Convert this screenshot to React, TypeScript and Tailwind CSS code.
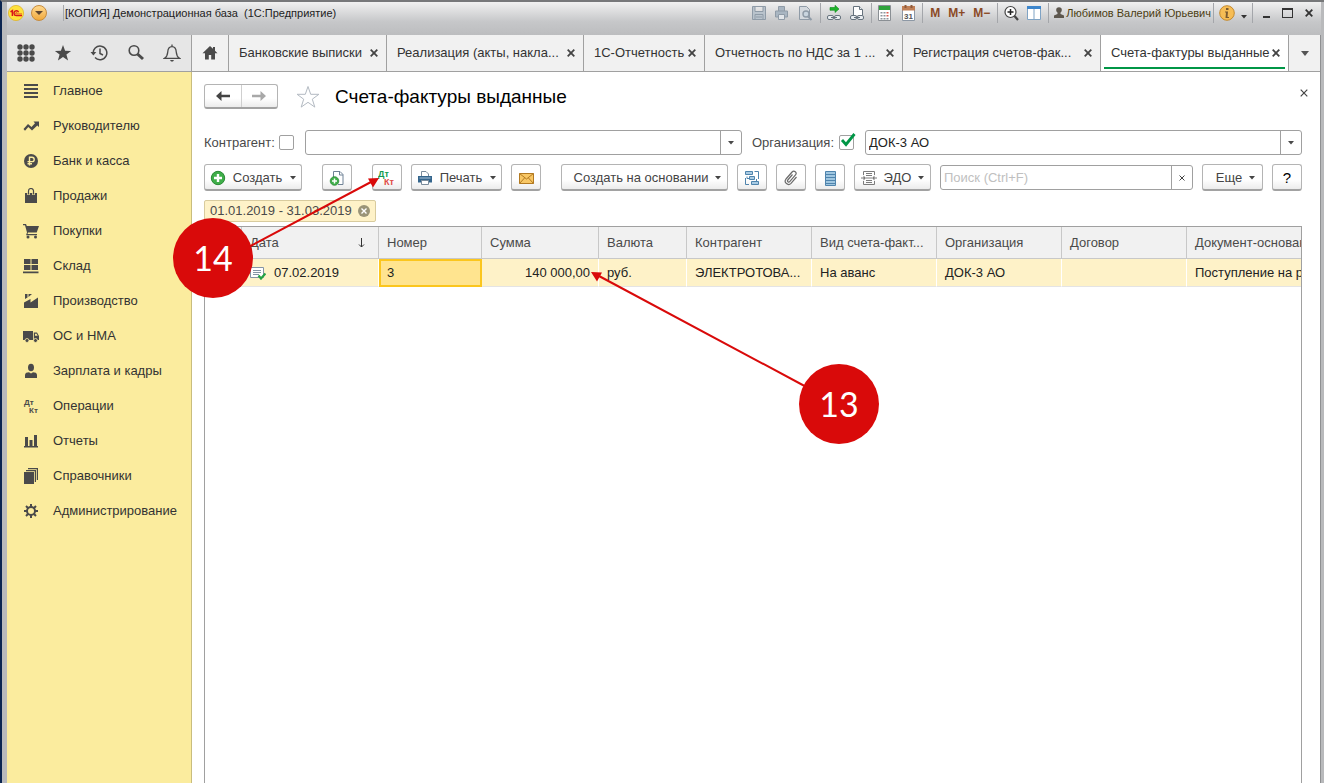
import type { ReactNode } from 'react'

// ─── Shared bits ───
const FONT = 'font-["Liberation_Sans",Arial,sans-serif]'

function Caret({ className = '' }: { className?: string }) {
  return (
    <svg viewBox="0 0 6 4" className={`h-1 w-1.5 shrink-0 ${className}`} fill="currentColor" aria-hidden="true">
      <path d="M0 0h6L3 3.5z" />
    </svg>
  )
}

function Cross({ bold = false }: { bold?: boolean }) {
  return (
    <svg viewBox="0 0 8 8" className="h-2 w-2 shrink-0" stroke="currentColor" strokeWidth={bold ? 1.8 : 1.2} aria-hidden="true">
      <path d="M.7.7l6.6 6.6M7.3.7L.7 7.3" />
    </svg>
  )
}

interface ToolButtonProps {
  children: ReactNode
  label?: string
  className?: string
}

function ToolButton({ children, label, className = '' }: ToolButtonProps) {
  return (
    <button
      type="button"
      aria-label={label}
      className={`flex h-[27px] shrink-0 items-center justify-center rounded-[3px] border border-b-2 border-[#b4b4b4] border-b-[#a2a2a2] bg-linear-to-b from-white from-60% to-[#ececec] pt-0.5 text-[#444] ${className}`}
    >
      {children}
    </button>
  )
}

// ─── Window title bar ───
function Separator() {
  return <span className="h-5 w-px bg-[#a4a6aa]" />
}

function TitleBar() {
  return (
    <header className="flex h-[33px] items-start bg-linear-to-b from-[#f1f1f1] via-[#c6c7c9] via-60% to-[#bcbdbf] pr-2">
      <div className="flex h-[21px] w-full items-center">
        <svg viewBox="0 0 16 16" className="ml-px h-4 w-4" aria-hidden="true">
          <circle cx="8" cy="8" r="7.6" fill="#ffe23b" stroke="#e0b52a" strokeWidth=".8" />
          <path d="M2.500 6.800L4.400 5.600V11" fill="none" stroke="#d8141b" strokeWidth="1.500" />
          <path d="M10.600 7.200A2.400 2.400 0 1 0 8.500 10.600H14" fill="none" stroke="#d8141b" strokeWidth="1.400" />
          <path d="M9.200 7.800a.8.8 0 1 0-.6 1.200H14" fill="none" stroke="#d8141b" strokeWidth=".8" />
        </svg>
        <button type="button" aria-label="Меню" className="ml-[7px] flex h-4 w-4 items-center justify-center rounded-full border border-[#c78b3c] bg-linear-to-b from-[#ffd98c] to-[#f0a93a] text-[#5e4630]">
          <svg viewBox="0 0 8 4" className="h-1 w-2" fill="currentColor" aria-hidden="true"><path d="M0 0h8L4 4z" /></svg>
        </button>
        <span className="ml-4 mr-px h-4 w-px bg-[#a7a9ac]" />
        <span className="flex-1 truncate whitespace-pre text-[11px] text-[#222]">[КОПИЯ] Демонстрационная база  (1С:Предприятие)</span>
        <SystemTools />
      </div>
    </header>
  )
}

function SystemTools() {
  return (
    <div className="flex items-center">
      <svg viewBox="0 0 62 16" className="mr-[7px] h-4 w-[62px]" fill="none" stroke="#8f9ba7" aria-hidden="true">
        <path d="M1.500 1.500h13v13h-13zM4 1.500v5h8v-5M4 14.500v-5h8v5M5 12h6" fill="#b9c3cc" />
        <path d="M27.500 6V1.500h6V6M24.500 6h12v6h-12z" fill="#a9b6c2" />
        <path d="M27.500 9.500h6v5h-6z" fill="#e2e6ea" />
        <path d="M48.500 1.500h7l3 3v10h-10z" fill="#d4d9de" />
        <circle cx="55" cy="9" r="3" fill="#c9d5df" strokeWidth="1.400" />
        <path d="M57 11.500l3.500 3.500" strokeWidth="2" />
      </svg>
      <Separator />
      <svg viewBox="0 0 40 16" className="mx-[5px] h-4 w-10" fill="none" aria-hidden="true">
        <path d="M4 2.500h5V.3L13 4 9 7.500V5.300H4z" fill="#1fb42b" stroke="#0d8a1c" strokeWidth=".6" />
        <g stroke="#66727d" fill="#e9edf0">
          <rect x="1.500" y="10.500" width="6" height="4" rx="1.500" />
          <rect x="8.500" y="10.500" width="6" height="4" rx="1.500" />
          <path d="M5 12.500h6" />
          <path d="M27.500 10V1.500h6l3 3V10" fill="#fff" />
          <path d="M33.500 1.500v3h3" />
          <rect x="24.500" y="10.500" width="6" height="4" rx="1.500" />
          <rect x="31.500" y="10.500" width="6" height="4" rx="1.500" />
          <path d="M28 12.500h6" />
        </g>
      </svg>
      <Separator />
      <svg viewBox="0 0 38 16" className="mx-[6px] h-4 w-[38px]" aria-hidden="true">
        <path d="M.5.500h12v15H.5z" fill="#fff" stroke="#8a8f94" />
        <path d="M1 1h11v4H1z" fill="#2fa33c" />
        <path d="M2.500 7h2v1.500h-2zM5.500 7h2v1.500h-2zM2.500 10h2v1.500h-2zM5.500 10h2v1.500h-2zM2.500 13h2v1.500h-2zM5.500 13h2v1.500h-2zM8.500 13h2v1.500h-2z" fill="#8d959c" />
        <path d="M8.500 7h2v1.500h-2zM8.500 10h2v1.500h-2z" fill="#d85a50" />
        <path d="M24.500 2.500h12v13h-12z" fill="#fff" stroke="#8d98a5" />
        <path d="M24 1h13v4.500H24z" fill="#c07f56" />
        <path d="M26.500 0h2v3h-2zM32.500 0h2v3h-2z" fill="#8e5a3a" />
        <text x="30.500" y="13.500" fontSize="8" fontWeight="bold" textAnchor="middle" fill="#555">31</text>
      </svg>
      <Separator />
      <div className="mx-[7px] flex gap-2 text-xs font-bold text-[#8b4a26]">
        <button type="button">M</button>
        <button type="button">M+</button>
        <button type="button">M−</button>
      </div>
      <Separator />
      <svg viewBox="0 0 40 16" className="mx-[5px] h-4 w-10" fill="none" aria-hidden="true">
        <circle cx="7.500" cy="7" r="5.500" fill="#fff" stroke="#444" strokeWidth="1.200" />
        <path d="M4.500 7h6M7.500 4v6" stroke="#222" strokeWidth="1.500" />
        <path d="M11.500 11l3.500 4" stroke="#444" strokeWidth="2.200" />
        <path d="M24.500 1.500h13v13h-13zM31 4v10" fill="#fff" stroke="#7fa3c4" />
        <path d="M24 1h14v3H24z" fill="#3d86cc" />
      </svg>
      <Separator />
      <svg viewBox="0 0 10 12" className="ml-[5px] h-3 w-[10px]" fill="#5d574e" aria-hidden="true">
        <circle cx="5" cy="3" r="2.800" />
        <path d="M3.500 5h3v2L10 8.500V11H0V8.500L3.500 7z" />
      </svg>
      <span className="mx-0.5 text-[11px] text-[#4b3d12]">Любимов Валерий Юрьевич</span>
      <Separator />
      <svg viewBox="0 0 16 16" className="ml-[5px] h-4 w-4" aria-hidden="true">
        <circle cx="8" cy="8" r="7.300" fill="#f6bd55" stroke="#c48a2e" />
        <path d="M7 3h2.500v2H7zM6 6.500h3L8.500 12H10v1H6.500L7 7.500H6z" fill="#7a5a30" />
      </svg>
      <Caret className="ml-[6px] mr-[5px] mt-2 text-[#333]" />
      <Separator />
      <div className="ml-[10px] flex items-center gap-3 text-[#333]">
        <button type="button" aria-label="Свернуть" className="mt-2 h-0.5 w-[7px] bg-current" />
        <button type="button" aria-label="Развернуть" className="h-[10px] w-[11px] border border-t-2 border-current" />
        <button type="button" aria-label="Закрыть окно"><Cross bold /></button>
      </div>
    </div>
  )
}

// ─── Tabs ───
const tabs = [
  { title: 'Банковские выписки', width: 'w-[158px]' },
  { title: 'Реализация (акты, накла...', width: 'w-[197px]' },
  { title: '1С-Отчетность', width: 'w-[121px]' },
  { title: 'Отчетность по НДС за 1 ...', width: 'w-[198px]' },
  { title: 'Регистрация счетов-фак...', width: 'w-[198px]' },
  { title: 'Счета-фактуры выданные', width: 'w-[188px]', active: true },
]

function TopBar() {
  return (
    <div className="flex h-[37px] border-b border-[#a0a0a0] bg-[#f1f1f1]">
      <div className="flex w-[185px] shrink-0 items-center justify-between border-r border-[#a0a0a0] bg-[#e6e6e6] px-[10px] text-[#4a4a4a]">
        <button type="button" aria-label="Все функции">
          <svg viewBox="0 0 18 18" className="h-[18px] w-[18px]" fill="currentColor">
            {[3, 9, 15].map((y) => [3, 9, 15].map((x) => <circle key={`${x}-${y}`} cx={x} cy={y} r="2.700" />))}
          </svg>
        </button>
        <button type="button" aria-label="Избранное">
          <svg viewBox="0 0 18 18" className="h-[18px] w-[18px]" fill="currentColor">
            <path d="M9 1l2.100 5.700 6 .2-4.700 3.700 1.700 5.900L9 13.100l-5.100 3.400 1.700-5.900L.9 6.900l6-.2z" />
          </svg>
        </button>
        <button type="button" aria-label="История">
          <svg viewBox="0 0 18 18" className="h-[18px] w-[18px]" fill="none" stroke="currentColor" strokeWidth="1.500">
            <path d="M3.300 10A6.800 6.800 0 1 1 5 13.500M10 4.500V9.500l3 1.500" />
            <path d="M.5 8h5.800L3.400 11.400z" fill="currentColor" stroke="none" />
          </svg>
        </button>
        <button type="button" aria-label="Поиск">
          <svg viewBox="0 0 18 18" className="h-[18px] w-[18px]" fill="none" stroke="currentColor">
            <circle cx="7" cy="6.500" r="4.800" strokeWidth="1.600" />
            <path d="M10.500 10l5.500 5" strokeWidth="3" />
          </svg>
        </button>
        <button type="button" aria-label="Оповещения">
          <svg viewBox="0 0 18 18" className="h-[18px] w-[18px]" fill="none" stroke="currentColor" strokeWidth="1.300">
            <path d="M9 .5v2M1.500 14.300c2.500-1.500 3-3 3.200-6C4.900 4.800 6.500 2.600 9 2.600s4.100 2.200 4.300 5.700c.2 3 .7 4.500 3.200 6z" />
            <path d="M7 16h4l-1 1.500H8z" fill="currentColor" stroke="none" />
          </svg>
        </button>
      </div>
      <button type="button" aria-label="Начальная страница" className="flex w-[37px] shrink-0 items-center justify-center border-r border-[#a0a0a0] text-[#4a4a4a]">
        <svg viewBox="0 0 16 14" className="h-[14px] w-4" fill="currentColor"><path d="M8 0L.5 7.200H3V13.500h3.800V9h2.400v4.500H13V7.200h2.500L13 4.700V1h-2v1.800z" /></svg>
      </button>
      <nav className="flex min-w-0 flex-1">
        {tabs.map((tab) => (
          <div
            key={tab.title}
            className={`relative flex items-center justify-between border-r border-[#a0a0a0] pl-[10px] pr-2 ${tab.width} ${tab.active ? 'bg-white' : ''}`}
          >
            <a href="#" className="whitespace-nowrap text-[#333]">{tab.title}</a>
            <button type="button" aria-label="Закрыть" className="text-[#444]"><Cross bold /></button>
            {tab.active && <span className="absolute inset-x-[3px] bottom-[2px] h-0.5 bg-[#009646]" />}
          </div>
        ))}
        <button type="button" aria-label="Список вкладок" className="flex min-w-[31px] flex-1 items-center justify-center text-[#555]">
          <svg viewBox="0 0 8 5" className="h-[5px] w-2" fill="currentColor"><path d="M0 0h8L4 5z" /></svg>
        </button>
      </nav>
    </div>
  )
}

// ─── Sections panel ───
const sections: { name: string; icon: ReactNode }[] = [
  { name: 'Главное', icon: <path d="M1 1h14v2H1zM1 5h14v2H1zM1 9h14v2H1zM1 13h14v2H1z" /> },
  {
    name: 'Руководителю',
    icon: <path d="M.5 11L5 6l3.500 3L12 5.200 10.500 3.500H16v5.500l-1.700-1.600L9 12.500 5.300 9 2 12.700z" />,
  },
  {
    name: 'Банк и касса',
    icon: (
      <>
        <circle cx="8" cy="8" r="7" />
        <path d="M6.500 12.500V4.200H9a2.100 2.100 0 0 1 0 4.400H4.500M4.500 10.700h4.500" fill="none" stroke="#fbec9e" strokeWidth="1.400" />
      </>
    ),
  },
  {
    name: 'Продажи',
    icon: (
      <>
        <path d="M2 5h12v10H2z" />
        <path d="M5.500 7V3a2.500 2.500 0 0 1 5 0v4" fill="none" stroke="#fbec9e" strokeWidth="2.600" />
        <path d="M5.500 6.500V3a2.500 2.500 0 0 1 5 0v3.500" fill="none" stroke="#4a4a4a" strokeWidth="1.200" />
      </>
    ),
  },
  {
    name: 'Покупки',
    icon: (
      <>
        <path d="M0 1h3l.8 2H16l-2.300 6.500H5L4.500 11H14v1.300H3L4 9.500 2 2.300H0z" />
        <circle cx="5" cy="14" r="1.500" />
        <circle cx="12.500" cy="14" r="1.500" />
      </>
    ),
  },
  { name: 'Склад', icon: <path d="M1 1h6.500v5H1zM8.500 1H15v5H8.500zM1 7h6.500v5H1zM8.500 7H15v5H8.500zM0 13.500h15.500v1.700H0z" /> },
  { name: 'Производство', icon: <path d="M1 15V9.500L7.500 6v3.500L15 4.500V15zM2 1h2.500v3.500L2 6zM5.500 1H9L5.500 4z" /> },
  {
    name: 'ОС и НМА',
    icon: (
      <>
        <path d="M0 3h10v9H0zM10.800 4.500H14L16 8v4h-5.200z" />
        <path d="M12 5.800h1.600l1 2H12z" fill="#fbec9e" />
        <circle cx="4" cy="12.500" r="2" stroke="#fbec9e" strokeWidth=".8" />
        <circle cx="12.500" cy="12.500" r="2" stroke="#fbec9e" strokeWidth=".8" />
      </>
    ),
  },
  {
    name: 'Зарплата и кадры',
    icon: (
      <>
        <ellipse cx="8" cy="4.500" rx="3" ry="3.800" />
        <path d="M2 15v-3c0-2 2-2.700 4-2.700L8 10.500l2-1.200c2 0 4 .7 4 2.700v3z" />
      </>
    ),
  },
  {
    name: 'Операции',
    icon: (
      <g fontSize="8" fontWeight="bold">
        <text x="1" y="7">Дт</text>
        <text x="6" y="15">Кт</text>
      </g>
    ),
  },
  { name: 'Отчеты', icon: <path d="M2 4h3v9H2zM6.500 7h3v6h-3zM11 2h3v11h-3zM1 13h14v1.500H1z" /> },
  { name: 'Справочники', icon: <path d="M1 4h10v12H1zM3 2h10v12h-1.200V3.200H3zM5 0h10v12h-1.200V1.200H5z" /> },
  {
    name: 'Администрирование',
    icon: (
      <>
        <circle cx="8" cy="8" r="4" fill="none" stroke="currentColor" strokeWidth="2" />
        <path
          d="M8 1v3M8 12v3M1 8h3M12 8h3M3 3l2.200 2.200M10.800 10.800L13 13M13 3l-2.200 2.200M5.200 10.800L3 13"
          stroke="currentColor"
          strokeWidth="2"
        />
      </>
    ),
  },
]

function Sidebar() {
  return (
    <nav className="w-[185px] shrink-0 border-r border-[#c9bd7e] bg-[#fbec9e] pt-px">
      {sections.map((s) => (
        <a key={s.name} href="#" className="flex h-[35px] items-center gap-[14px] pl-4 text-[#333]">
          <svg viewBox="0 0 16 16" className="h-4 w-4 shrink-0 text-[#4a4a4a]" fill="currentColor" aria-hidden="true">
            {s.icon}
          </svg>
          {s.name}
        </a>
      ))}
    </nav>
  )
}

// ─── Invoice list form ───
function FormHeader() {
  return (
    <div className="flex h-[25px] items-center">
      <div className="flex h-[25px] w-[74px] rounded-[3px] border border-b-2 border-[#b4b4b4] border-b-[#a2a2a2] bg-linear-to-b from-white from-60% to-[#ececec]">
        <button type="button" aria-label="Назад" className="flex flex-1 items-center justify-center border-r border-[#cfcfcf] text-[#444]">
          <svg viewBox="0 0 14 10" className="h-[10px] w-[14px]" fill="currentColor"><path d="M0 5l5.500-5v3.800H14v2.400H5.500V10z" /></svg>
        </button>
        <button type="button" aria-label="Вперед" className="flex flex-1 items-center justify-center text-[#a8a8a8]">
          <svg viewBox="0 0 14 10" className="h-[10px] w-[14px]" fill="currentColor"><path d="M14 5L8.500 0v3.800H0v2.400h8.500V10z" /></svg>
        </button>
      </div>
      <button type="button" aria-label="В избранное" className="ml-[18px]">
        <svg viewBox="0 0 24 24" className="h-6 w-6" fill="none" stroke="#b3bac2">
          <path d="M12 1.500l2.700 7.800h8.200l-6.600 4.900 2.500 7.900-6.800-4.800-6.800 4.800 2.500-7.900L1.100 9.300h8.200z" />
        </svg>
      </button>
      <h1 className="ml-[15px] flex-1 text-[19px] text-black">Счета-фактуры выданные</h1>
      <button type="button" aria-label="Закрыть форму" className="-mr-1.5 mb-2 text-[#444]"><Cross /></button>
    </div>
  )
}

function Filters() {
  return (
    <div className="mt-[21px] flex h-[25px] items-center text-[#4a4a4a]">
      <label htmlFor="use-contractor" className="w-[75px] shrink-0">Контрагент:</label>
      <input id="use-contractor" type="checkbox" className="h-[15px] w-[15px] shrink-0 appearance-none rounded-[2px] border border-[#a0a0a0]" />
      <div className="ml-[11px] flex h-full min-w-0 flex-1 rounded-[3px] border border-[#a0a0a0]">
        <input aria-label="Контрагент" className="min-w-0 flex-1 px-1 outline-none" />
        <button type="button" aria-label="Выбрать контрагента" className="flex w-[21px] items-center justify-center border-l border-[#a0a0a0]"><Caret /></button>
      </div>
      <label htmlFor="use-company" className="ml-[10px] w-[87px] shrink-0">Организация:</label>
      <span className="relative h-[15px] w-[15px] shrink-0">
        <input id="use-company" type="checkbox" defaultChecked className="block h-[15px] w-[15px] appearance-none rounded-[2px] border border-[#a0a0a0]" />
        <svg viewBox="0 0 16 14" className="pointer-events-none absolute -top-[2px] left-px h-[14px] w-4" fill="none" stroke="#009646" strokeWidth="2.800">
          <path d="M2 7l4 4.500L14.500 1" />
        </svg>
      </span>
      <div className="ml-[11px] flex h-full min-w-0 flex-1 rounded-[3px] border border-[#a0a0a0]">
        <input aria-label="Организация" defaultValue="ДОК-3 АО" className="min-w-0 flex-1 px-[3px] text-[#222] outline-none" />
        <button type="button" aria-label="Выбрать организацию" className="flex w-[21px] items-center justify-center border-l border-[#a0a0a0]"><Caret /></button>
      </div>
    </div>
  )
}

function CommandBar() {
  return (
    <div className="mt-[9px] flex h-[27px] items-center">
      <ToolButton className="w-[98px]">
        <svg viewBox="0 0 16 16" className="mr-[7px] h-4 w-4" aria-hidden="true">
          <circle cx="8" cy="8" r="6.700" fill="#3fae49" stroke="#2a8a35" />
          <path d="M8 4v8M4 8h8" stroke="#fff" strokeWidth="2.400" />
        </svg>
        Создать
        <Caret className="ml-2" />
      </ToolButton>
      <ToolButton label="Скопировать" className="ml-5 w-[30px]">
        <svg viewBox="0 0 16 16" className="h-4 w-4" fill="none" aria-hidden="true">
          <path d="M4.500 7V1.500h6.500l3 3v10H9" fill="#fff" stroke="#6f8296" />
          <path d="M10.500 1.500V5H14" stroke="#6f8296" />
          <circle cx="5.500" cy="11" r="4.300" fill="#3fae49" stroke="#2a8a35" strokeWidth=".8" />
          <path d="M5.500 8.500v5M3 11h5" stroke="#fff" strokeWidth="1.500" />
        </svg>
      </ToolButton>
      <ToolButton label="Проводки" className="ml-5 w-[30px]">
        <svg viewBox="0 0 18 18" className="h-[18px] w-[18px]" fontSize="9" fontWeight="bold" aria-hidden="true">
          <text x="0" y="8" fill="#129a50">Дт</text>
          <text x="6" y="16" fill="#e04a44">Кт</text>
        </svg>
      </ToolButton>
      <ToolButton className="ml-[9px] w-[91px]">
        <svg viewBox="0 0 16 16" className="mr-[7px] h-4 w-4" fill="none" aria-hidden="true">
          <path d="M4.500 6V1.500H9l2.500 2.500v2" fill="#fff" stroke="#7b8c9c" />
          <path d="M1 6h14v6.500H1z" fill="#34658c" />
          <path d="M2.500 8h11" stroke="#a9c4da" />
          <path d="M4.500 10.500h7v4h-7z" fill="#fff" stroke="#7b8c9c" />
        </svg>
        Печать
        <Caret className="ml-2" />
      </ToolButton>
      <ToolButton label="Отправить по почте" className="ml-[9px] w-[30px]">
        <svg viewBox="0 0 15 11" className="h-[11px] w-[15px]" fill="none" stroke="#b37a22" aria-hidden="true">
          <path d="M.5.500h14v10H.5z" fill="#f8c765" />
          <path d="M.5.500l7 5.500 7-5.500M.5 10.500L5.500 5M14.500 10.500l-5-5.500" />
        </svg>
      </ToolButton>
      <ToolButton className="ml-5 w-[167px]">
        <span className="ml-[6px]">Создать на основании</span>
        <Caret className="ml-[7px]" />
      </ToolButton>
      <ToolButton label="Связанные документы" className="ml-[9px] w-[30px]">
        <svg viewBox="0 0 16 16" className="h-4 w-4" fill="none" stroke="#4f84ad" aria-hidden="true">
          <path d="M1.500 1.500h7v3h-7zM5.500 6.500h5v3h-5zM7.500 11.500h7v3h-7z" fill="#a9cbe3" />
          <path d="M10.500 1.500h4V9M3 6.500v2h2.500M1.500 8v6.500H5M12.500 9v2.500" />
        </svg>
      </ToolButton>
      <ToolButton label="Файлы" className="ml-[9px] w-[30px]">
        <svg viewBox="0 0 16 16" className="h-4 w-4" fill="none" stroke="#6b6b6b" strokeWidth="1.200" aria-hidden="true">
          <path d="M9.500 4.500L4.800 10a1.200 1.200 0 0 0 1.900 1.600l5.800-6.700a2.200 2.200 0 0 0-3.400-2.900L3 9a3.300 3.300 0 0 0 5 4.300l5.500-6.300" />
        </svg>
      </ToolButton>
      <ToolButton label="Реестр" className="ml-[9px] w-[30px]">
        <svg viewBox="0 0 11 15" className="h-[15px] w-[11px]" aria-hidden="true">
          <path d="M.5.500h10v14H.5z" fill="#9fc6e0" stroke="#4f84ad" />
          <path d="M1 3.500h9M1 6.500h9M1 9.500h9M1 12.500h9" stroke="#4f84ad" />
        </svg>
      </ToolButton>
      <ToolButton className="ml-[9px] w-[77px]">
        <svg viewBox="0 0 16 16" className="mr-[7px] h-4 w-4" fill="none" stroke="#7c7c7c" aria-hidden="true">
          <path d="M2.500 5V1.500h11V5M2.500 11v3.500h11V11M5 3.500h6M5 5.500h6M5 8h6M5 10.500h6M5 12.500h6M0 8h3M13 8h3" />
          <path d="M2.500 5.500L5 8l-2.500 2.500zM13.500 5.500L11 8l2.500 2.500z" fill="#7c7c7c" stroke="none" />
        </svg>
        ЭДО
        <Caret className="ml-[7px]" />
      </ToolButton>
      <div className="ml-[9px] flex h-[25px] min-w-0 flex-1 rounded-[3px] border border-[#a0a0a0]">
        <input aria-label="Поиск" placeholder="Поиск (Ctrl+F)" className="min-w-0 flex-1 px-[3px] outline-none placeholder:text-[#c0c0c0]" />
        <button type="button" aria-label="Очистить" className="flex w-[21px] items-center justify-center border-l border-[#a0a0a0] text-[#444]">
          <svg viewBox="0 0 6 6" className="h-1.5 w-1.5" stroke="currentColor"><path d="M.5.500l5 5M5.500.500l-5 5" /></svg>
        </button>
      </div>
      <ToolButton className="ml-[9px] w-[61px]">
        <span className="ml-[6px]">Еще</span>
        <Caret className="ml-[7px]" />
      </ToolButton>
      <ToolButton className="ml-[9px] w-[30px]"><span className="text-[15px] text-black">?</span></ToolButton>
    </div>
  )
}

const columns = [
  { title: '', width: 'w-[37px]' },
  { title: 'Дата', width: 'w-[137px]' },
  { title: 'Номер', width: 'w-[103px]' },
  { title: 'Сумма', width: 'w-[117px]' },
  { title: 'Валюта', width: 'w-[88px]' },
  { title: 'Контрагент', width: 'w-[125px]' },
  { title: 'Вид счета-факт...', width: 'w-[125px]' },
  { title: 'Организация', width: 'w-[125px]' },
  { title: 'Договор', width: 'w-[125px]' },
  { title: 'Документ-основание', width: '' },
]

function InvoiceTable() {
  const cell = 'whitespace-nowrap border-r border-white px-2'
  return (
    <div className="mt-1 flex-1 overflow-hidden border border-b-0 border-[#a0a0a0]">
      <table className="w-full table-fixed border-separate border-spacing-0 text-left">
        <thead>
          <tr className="h-8 bg-[#f1f1f1] text-[#4a4a4a]">
            {columns.map((c, i) => (
              <th
                key={c.title}
                className={`overflow-hidden whitespace-nowrap border-b border-[#c8c8c8] pl-2 font-normal ${c.width} ${i < columns.length - 1 ? 'border-r' : ''}`}
              >
                {c.title === 'Дата' ? (
                  <span className="flex items-center justify-between pr-[13px]">
                    Дата
                    <svg viewBox="0 0 7 10" className="h-[10px] w-[7px]" fill="none" stroke="#333" aria-hidden="true"><path d="M3.500 0v9M1 6.500L3.500 9 6 6.500" /></svg>
                  </span>
                ) : (
                  c.title
                )}
              </th>
            ))}
          </tr>
        </thead>
        <tbody>
          <tr className="h-[28px] bg-[#fef2c8] text-[#222] [&>td]:border-b [&>td]:border-b-[#e4e4e4]">
            <td className={cell} />
            <td className={cell}>
              <span className="flex items-center gap-2">
                <svg viewBox="0 0 16 14" className="h-[14px] w-4 shrink-0" fill="none" aria-hidden="true">
                  <path d="M.5 1.500h13v10H.5z" fill="#fff" stroke="#8494a5" />
                  <path d="M3 4.500h8M3 6.500h8M3 8.500h6" stroke="#8494a5" />
                  <path d="M8.500 9.500l2.500 3 4.500-5" stroke="#25a244" strokeWidth="2.200" />
                </svg>
                07.02.2019
              </span>
            </td>
            <td className={`${cell} bg-[#ffe48f] outline-2 -outline-offset-2 outline-[#fbc61e]`}>3</td>
            <td className={`${cell} text-right`}>140 000,00</td>
            <td className={cell}>руб.</td>
            <td className={cell}>ЭЛЕКТРОТОВА...</td>
            <td className={cell}>На аванс</td>
            <td className={cell}>ДОК-3 АО</td>
            <td className={cell} />
            <td className="overflow-hidden whitespace-nowrap pl-2">Поступление на расчетный счет</td>
          </tr>
        </tbody>
      </table>
    </div>
  )
}

// ─── Numbered step markers over the form ───
function Callouts() {
  const badge = 'absolute flex h-20 w-20 items-center justify-center rounded-full bg-[#d90a0a] font-[Lato,sans-serif] text-[34px] text-white'
  return (
    <div className="pointer-events-none absolute -left-0.5 -top-0.5 bottom-0 right-0 overflow-hidden">
      <svg className="absolute left-0 top-0 h-full w-full" fill="#d90a0a" stroke="#d90a0a">
        <path d="M245 249L371 182M812 390L599 276" strokeWidth="2" />
        <path d="M379 178l-11 .5 5 9zM591 272l11 .5-5 9z" stroke="none" />
      </svg>
      <span className={`${badge} left-[173px] top-[218px]`}>14</span>
      <span className={`${badge} left-[799px] top-[364px]`}>13</span>
    </div>
  )
}

export default function App() {
  return (
    <div className={`relative flex min-h-screen flex-col border-l-2 border-t-2 border-l-[#0b2550] border-t-[#77787a] bg-[#b9babc] pl-[5px] pr-[3px] text-[13px] leading-4 ${FONT}`}>
      <TitleBar />
      <div className="flex flex-1 flex-col border-r border-[#8f9092] bg-white">
        <TopBar />
        <div className="flex flex-1">
          <Sidebar />
          <main className="flex min-w-0 flex-1 flex-col pl-3 pr-[18px] pt-3">
            <FormHeader />
            <Filters />
            <CommandBar />
            <div className="mt-[9px] flex h-[22px] w-[172px] items-center justify-between rounded-[2px] border border-[#d8cb9e] bg-[#fef2c8] px-[5px] text-[#4a4a4a]">
              01.01.2019 - 31.03.2019
              <button type="button" aria-label="Сбросить период">
                <svg viewBox="0 0 12 12" className="h-3 w-3"><circle cx="6" cy="6" r="6" fill="#9a9478" /><path d="M3.500 3.500l5 5M8.500 3.500l-5 5" stroke="#fff" strokeWidth="1.400" /></svg>
              </button>
            </div>
            <InvoiceTable />
          </main>
        </div>
      </div>
      <Callouts />
    </div>
  )
}
